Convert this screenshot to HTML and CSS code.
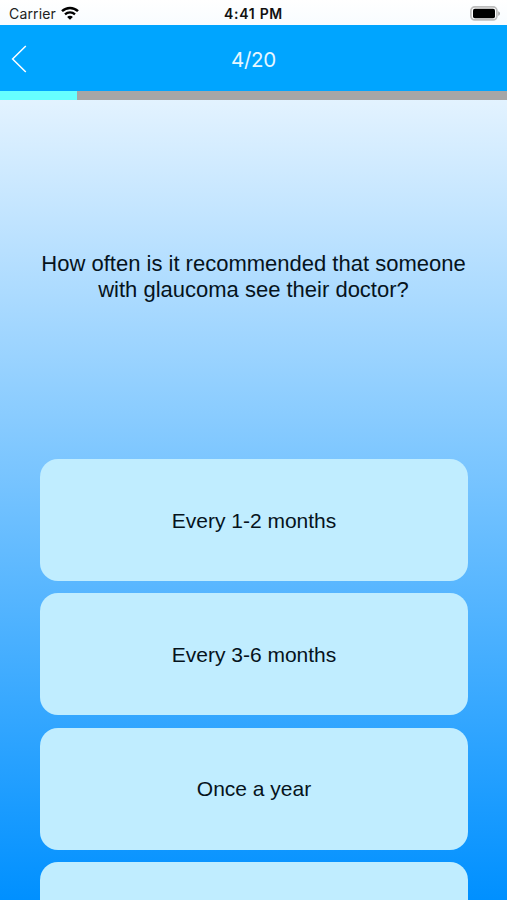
FILE: index.html
```html
<!DOCTYPE html>
<html lang="en">
    <head>
        <meta charset="utf-8">
        <title>Quiz</title>
        <link rel="stylesheet" href="styles.css">
    </head>
    <body>
        <div class="screen">
            <!-- status bar -->
            <div class="status">
                <div class="carrier">
                    <span>Carrier</span>
                    <svg class="wifi" width="18" height="14" viewBox="0 0 18 14">
                        <path d="M1 5.2C5.6 .9 12.4 .9 17 5.2" fill="none" stroke="#000" stroke-width="2.5"/>
                        <path d="M4 8.3C6.8 5.7 11.2 5.7 14 8.3" fill="none" stroke="#000" stroke-width="2.3"/>
                        <path d="M9 13.8L6.1 10.9C7.7 9.4 10.3 9.4 11.9 10.9Z"/>
                    </svg>
                </div>
                <div class="time">4:41 PM</div>
                <div class="power">
                    <svg width="31" height="15" viewBox="0 0 31 15">
                        <rect x=".9" y=".9" width="26" height="13" rx="3.8" fill="#fff" stroke="#bdbdbd" stroke-width="1.7"/>
                        <rect x="3" y="2.8" width="22" height="9.4" rx="1.8"/>
                        <path d="M28.2 5.2C30.6 6.2 30.6 8.8 28.2 9.8Z" fill="#aaa"/>
                    </svg>
                </div>
            </div>
            <!-- nav -->
            <div class="nav">
                <svg class="back" width="16" height="28" viewBox="0 0 16 28">
                    <path d="M14.8 1L1.6 14L14.8 27" fill="none" stroke="#fff" stroke-width="1.5"/>
                </svg>
                <div class="count">4/20</div>
            </div>
            <div class="progress">
                <div class="bar"></div>
            </div>
            <!-- question -->
            <div class="question">
                <p>How often is it recommended that someone<br>with glaucoma see their doctor?</p>
            </div>
            <!-- answers -->
            <div class="answers">
                <div class="answer">Every 1-2 months</div>
                <div class="answer">Every 3-6 months</div>
                <div class="answer">Once a year</div>
                <div class="answer"></div>
            </div>
        </div>
    </body>
</html>
```

FILE: styles.css
```css
body {
    margin: 0;
    font-family: "Liberation Sans", Arial, sans-serif;
    color: #06131c;
}
.screen {
    display: flex;
    flex-direction: column;
    height: 900px;
    overflow: hidden;
    background: linear-gradient(#fff, #0090ff);
}
/* status bar */
.status {
    display: grid;
    grid-template-columns: 1fr auto 1fr;
    align-items: center;
    flex: none;
    height: 25px;
    padding: 1px 6px 0 6px;
    box-sizing: border-box;
    font-family: Inter, sans-serif;
    font-size: 14px;
    color: #222;
}
.carrier {
    display: flex;
    align-items: center;
    gap: 5.5px;
    padding-left: 3px;
    letter-spacing: .15px;
}
.time {
    font-size: 14px;
    font-weight: 600;
    letter-spacing: .7px;
    color: #111;
}
.power {
    display: flex;
    justify-content: flex-end;
}
/* nav */
.nav {
    display: grid;
    grid-template-columns: 1fr auto 1fr;
    align-items: center;
    flex: none;
    height: 66px;
    padding: 2px 11px 0;
    box-sizing: border-box;
    background: #00a5ff;
}
.count {
    grid-column: 2;
    font-family: Inter, sans-serif;
    font-size: 20.5px;
    letter-spacing: -.3px;
    color: #e6f7ff;
}
/* progress */
.progress {
    flex: none;
    height: 9px;
    background: #a6a6a6;
}
.bar {
    width: 77px;
    height: 9px;
    background: #66ffff;
}
/* question */
.question {
    display: flex;
    align-items: center;
    justify-content: center;
    flex: none;
    height: 353px;
    box-sizing: border-box;
}
.question p {
    margin: 0;
    font-size: 22px;
    line-height: 25.5px;
    text-align: center;
    white-space: nowrap;
}
/* answers */
.answers {
    display: flex;
    flex-direction: column;
    gap: 12.4px;
    padding: 6px 39px 0 40px;
}
.answer {
    display: flex;
    align-items: center;
    justify-content: center;
    flex: none;
    height: 122px;
    padding-top: 1px;
    box-sizing: border-box;
    border-radius: 18px;
    background: #c0edff;
    font-size: 21px;
}
```
